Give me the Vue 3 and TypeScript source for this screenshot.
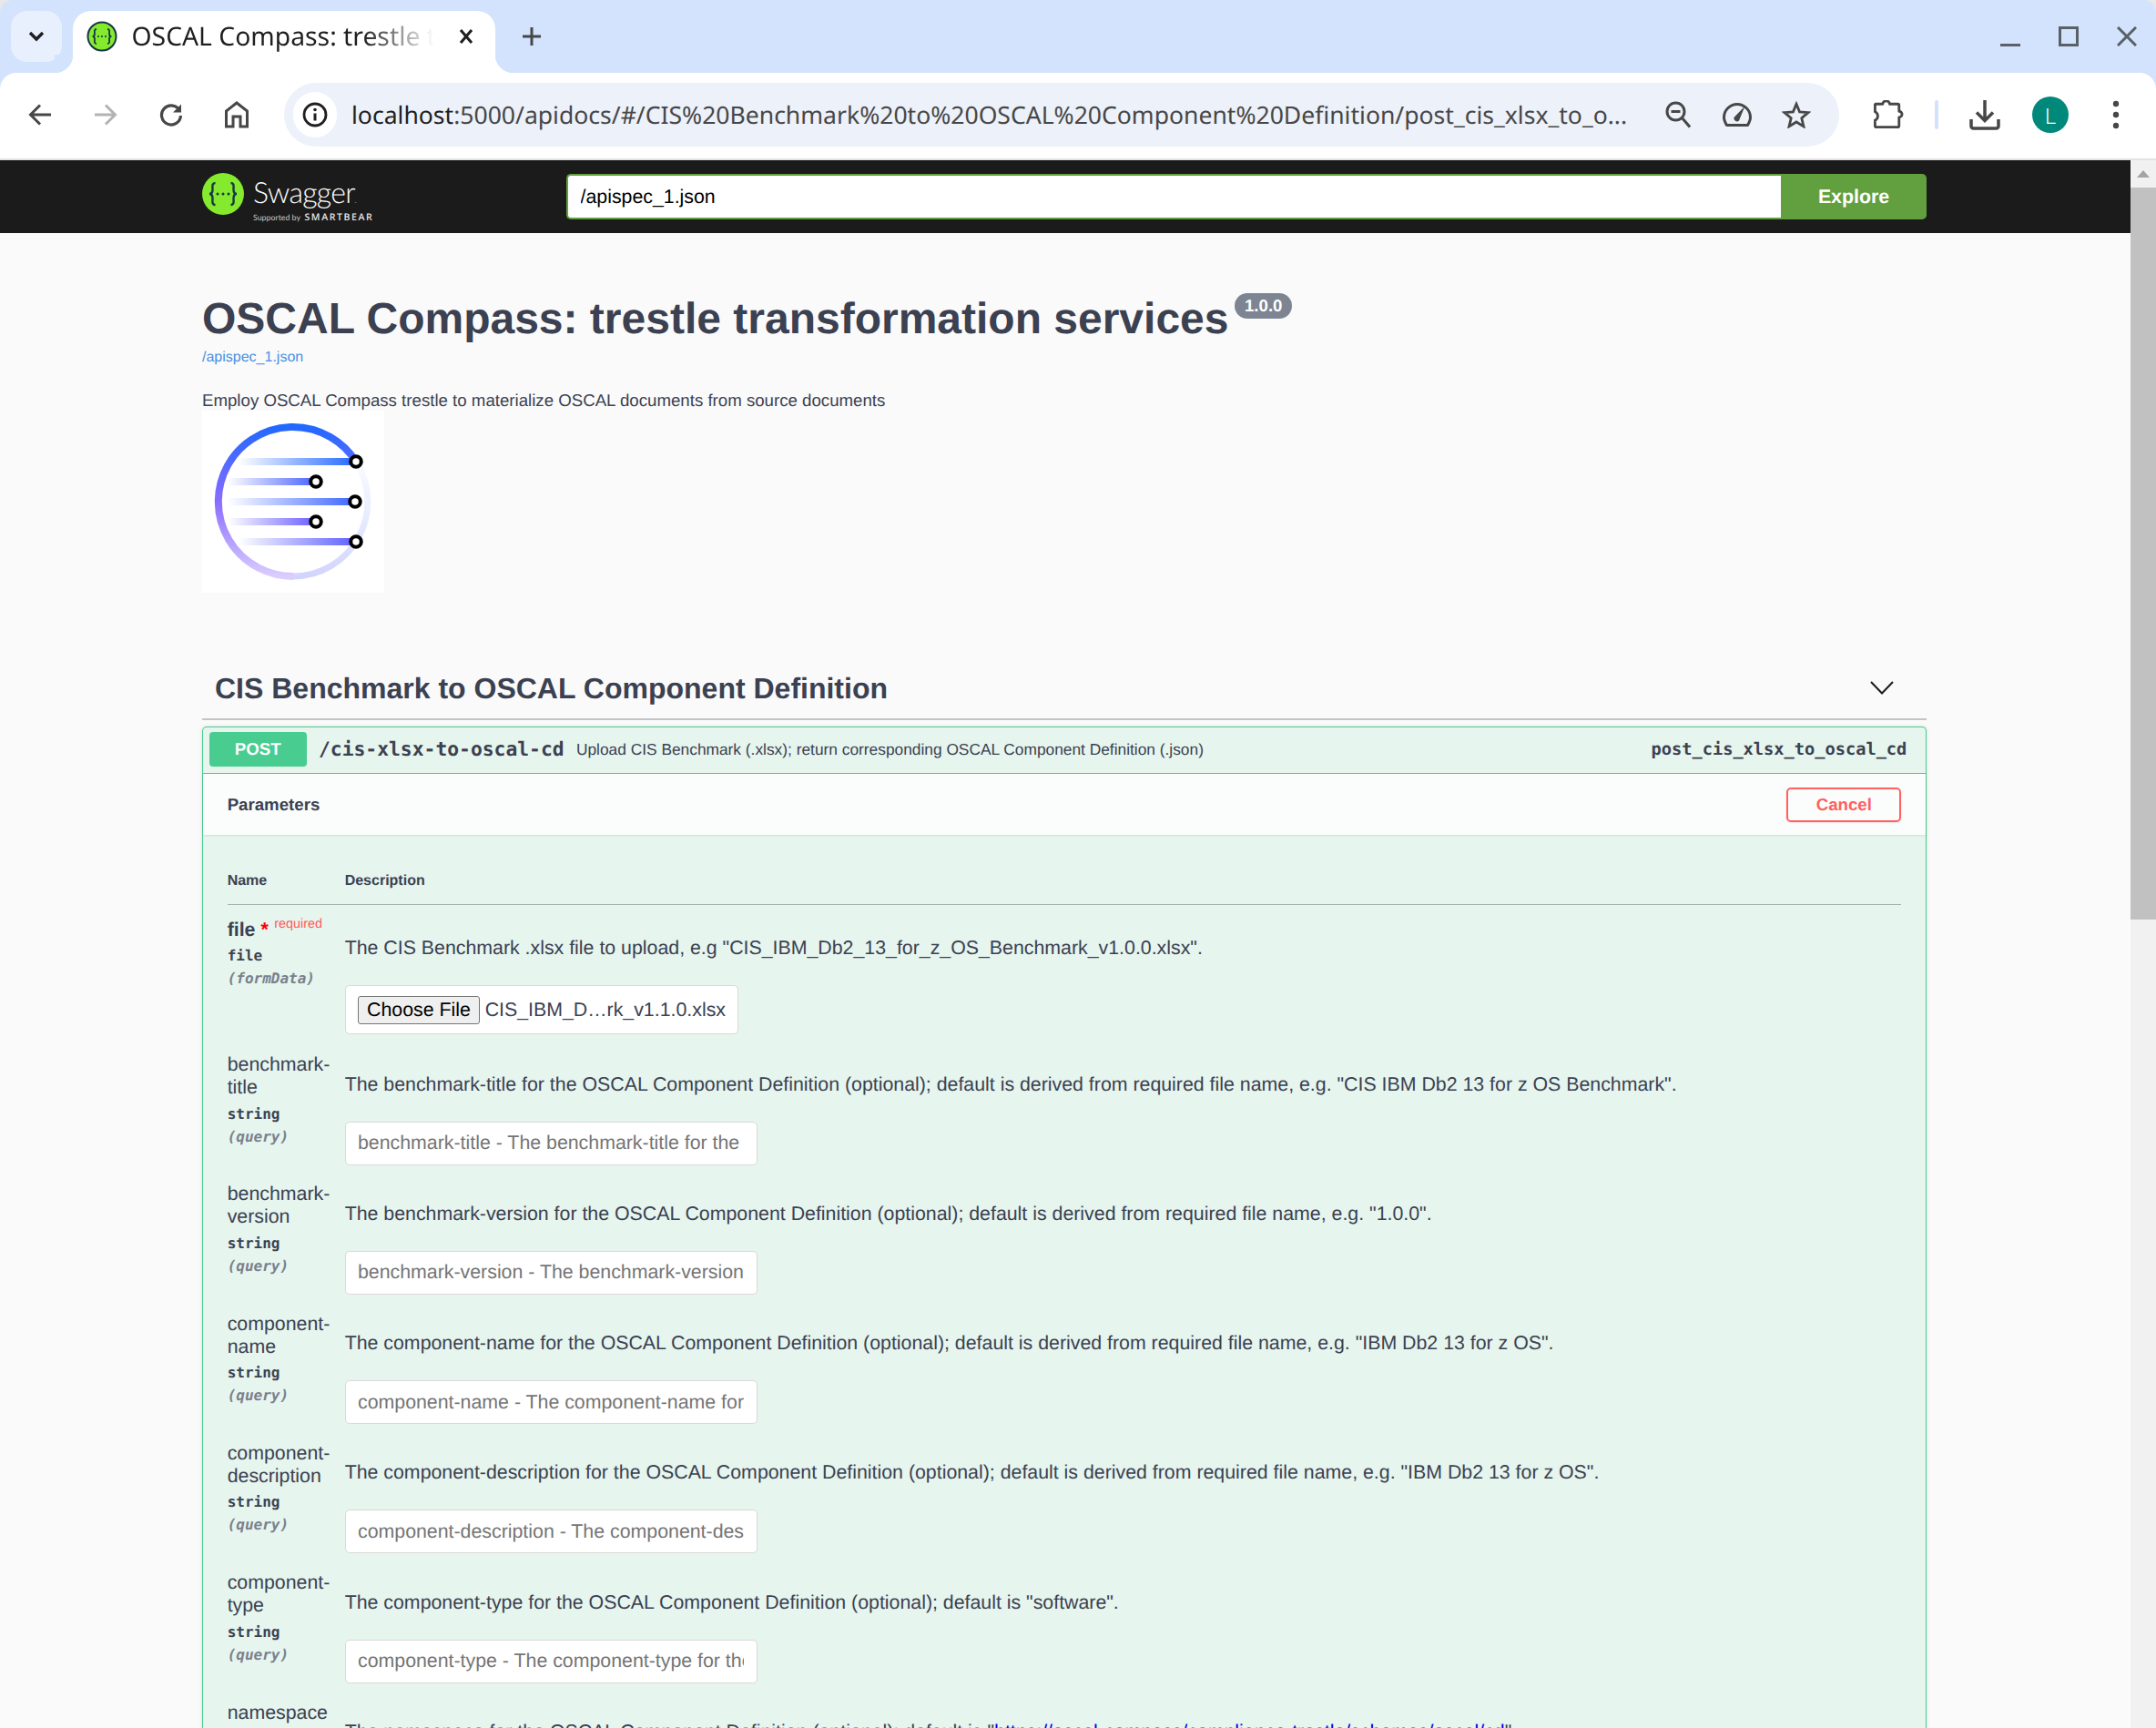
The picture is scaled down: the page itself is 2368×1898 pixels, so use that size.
<script setup lang="ts">
interface Param {
  name: string
  type: string
  where: string
  text: string
  link?: string
}

const params: Param[] = [
  {
    name: 'benchmark-title',
    type: 'string',
    where: '(query)',
    text: 'The benchmark-title for the OSCAL Component Definition (optional); default is derived from required file name, e.g. "CIS IBM Db2 13 for z OS Benchmark".',
  },
  {
    name: 'benchmark-version',
    type: 'string',
    where: '(query)',
    text: 'The benchmark-version for the OSCAL Component Definition (optional); default is derived from required file name, e.g. "1.0.0".',
  },
  {
    name: 'component-name',
    type: 'string',
    where: '(query)',
    text: 'The component-name for the OSCAL Component Definition (optional); default is derived from required file name, e.g. "IBM Db2 13 for z OS".',
  },
  {
    name: 'component-description',
    type: 'string',
    where: '(query)',
    text: 'The component-description for the OSCAL Component Definition (optional); default is derived from required file name, e.g. "IBM Db2 13 for z OS".',
  },
  {
    name: 'component-type',
    type: 'string',
    where: '(query)',
    text: 'The component-type for the OSCAL Component Definition (optional); default is "software".',
  },
  {
    name: 'namespace',
    type: 'string',
    where: '(query)',
    text: 'The namespace for the OSCAL Component Definition (optional); default is "',
    link: 'https://oscal-compass/compliance-trestle/schemas/oscal/cd',
  },
]

const logoLines = [
  { y: 56, x1: 40, x2: 169, id: 'l1' },
  { y: 78, x1: 28, x2: 125, id: 'l2' },
  { y: 100, x1: 28, x2: 168, id: 'l3' },
  { y: 122, x1: 28, x2: 125, id: 'l4' },
  { y: 144, x1: 40, x2: 169, id: 'l5' },
]
</script>

<template>
  <div class="screen">
    <header class="chrome">
      <div class="tabstrip">
        <button class="tab-search">
          <svg width="24" height="14" viewBox="0 0 24 14"><path d="M5 3l7 7 7-7" fill="none" stroke="#1f1f1f" stroke-width="3.4" /></svg>
        </button>
        <div class="tab">
          <svg class="favicon" width="34" height="34" viewBox="0 0 34 34">
            <circle cx="17" cy="17" r="15.5" fill="#85ea2d" stroke="#173646" stroke-width="2" />
            <path d="M11 9c-3 0-2 3-2 5s-1 3-2.400 3c1.400 0 2.400 1 2.400 3s-1 5 2 5M23 9c3 0 2 3 2 5s1 3 2.400 3c-1.400 0-2.400 1-2.400 3s1 5-2 5" fill="none" stroke="#173646" stroke-width="1.800" />
            <circle cx="13" cy="17" r="1.100" fill="#173646" /><circle cx="17" cy="17" r="1.100" fill="#173646" /><circle cx="21" cy="17" r="1.100" fill="#173646" />
          </svg>
          <span class="tab-title">OSCAL Compass: trestle transformation services</span>
          <svg class="tab-close" width="16" height="16" viewBox="0 0 16 16"><path d="M2 1l12 14M14 1L2 15" stroke="#1f1f1f" stroke-width="3" /></svg>
        </div>
        <svg class="new-tab" width="20" height="20" viewBox="0 0 20 20"><path d="M10 0v20M0 10h20" stroke="#474747" stroke-width="3" /></svg>
        <div class="window-controls">
          <svg width="22" height="22" viewBox="0 0 22 22"><path d="M0 20.500h22" stroke="#596066" stroke-width="3" /></svg>
          <svg width="22" height="22" viewBox="0 0 22 22"><rect x="1.500" y="1.500" width="19" height="19" fill="none" stroke="#596066" stroke-width="3" /></svg>
          <svg width="22" height="22" viewBox="0 0 22 22"><path d="M1 1l20 20M21 1L1 21" stroke="#596066" stroke-width="3" /></svg>
        </div>
      </div>

      <div class="toolbar">
        <button class="tool">
          <svg width="26" height="24" viewBox="0 0 26 24"><path d="M13 1.500L2.500 12 13 22.500M3 12h22" fill="none" stroke="#474747" stroke-width="3" /></svg>
        </button>
        <button class="tool">
          <svg width="26" height="24" viewBox="0 0 26 24"><path d="M13 1.500L23.500 12 13 22.500M23 12H1" fill="none" stroke="#b3b3b3" stroke-width="3" /></svg>
        </button>
        <button class="tool">
          <svg width="26" height="26" viewBox="0 0 26 26"><path d="M22.500 9A10.500 10.500 0 1 0 23.500 14" fill="none" stroke="#474747" stroke-width="3.200" /><path d="M24 1.500V10.500H15z" fill="#474747" /></svg>
        </button>
        <button class="tool">
          <svg width="26" height="30" viewBox="0 0 26 30"><path d="M1.500 28V11L13 2l11.500 9v17h-7.500V17H9v11z" fill="none" stroke="#474747" stroke-width="3" /></svg>
        </button>

        <div class="omnibox">
          <span class="site-info">
            <svg width="28" height="28" viewBox="0 0 28 28"><circle cx="14" cy="14" r="12" fill="none" stroke="#1f1f1f" stroke-width="2.800" /><path d="M14 12.500v8" stroke="#1f1f1f" stroke-width="3" /><circle cx="14" cy="8.500" r="1.800" fill="#1f1f1f" /></svg>
          </span>
          <span class="url"><span class="host">localhost</span>:5000/apidocs/#/CIS%20Benchmark%20to%20OSCAL%20Component%20Definition/post_cis_xlsx_to_o...</span>
          <span class="omni-action">
            <svg width="28" height="30" viewBox="0 0 28 30"><circle cx="11.500" cy="11.500" r="9.500" fill="none" stroke="#474747" stroke-width="3" /><path d="M6.500 11.500h10" stroke="#474747" stroke-width="3" /><path d="M18 18l9 10.500" stroke="#474747" stroke-width="3" /></svg>
          </span>
          <span class="omni-action">
            <svg width="32" height="26" viewBox="0 0 32 26"><path d="M4.500 24.500H27.500C29.500 21 30.500 18.500 30.500 16A14.500 14.500 0 0 0 1.500 16C1.500 18.500 2.500 21 4.500 24.500Z" fill="none" stroke="#474747" stroke-width="3" stroke-linejoin="round" /><path d="M12.500 16L24.500 3.500 18 19.500a3.400 3.400 0 0 1-5.500-3.500z" fill="#474747" /></svg>
          </span>
          <span class="omni-action">
            <svg width="32" height="30" viewBox="0 0 34 32"><path d="M17 3.500l3.800 9.200 10 .8-7.600 6.500 2.300 9.700L17 24.500l-8.500 5.200 2.300-9.700-7.600-6.500 10-.8z" fill="none" stroke="#474747" stroke-width="3" /></svg>
          </span>
        </div>

        <button class="tool">
          <svg width="34" height="32" viewBox="0 0 36 34"><path d="M3 4.500h8.500a4 3.500 0 0 1 8 0H29a1.500 1.500 0 0 1 1.500 1.500v7a3.500 3.500 0 0 1 0 7V30a1.500 1.500 0 0 1-1.500 1.500H4A1.500 1.500 0 0 1 2.500 30v-6.500a5.500 5.500 0 0 0 0-10V5z" fill="none" stroke="#474747" stroke-width="3" stroke-linejoin="round" /></svg>
        </button>
        <span class="divider"></span>
        <button class="tool">
          <svg width="34" height="34" viewBox="0 0 34 34"><path d="M17 1v22M8 14.500l9 9 9-9" fill="none" stroke="#474747" stroke-width="3.500" /><path d="M2 22v7.500a2.500 2.500 0 0 0 2.500 2.500h25a2.500 2.500 0 0 0 2.500-2.500V22" fill="none" stroke="#474747" stroke-width="3.500" /></svg>
        </button>
        <button class="tool"><span class="avatar">L</span></button>
        <button class="tool">
          <svg width="8" height="32" viewBox="0 0 8 32"><circle cx="4" cy="4" r="3.200" fill="#474747" /><circle cx="4" cy="16" r="3.200" fill="#474747" /><circle cx="4" cy="28" r="3.200" fill="#474747" /></svg>
        </button>
      </div>
    </header>

    <div class="viewport">
      <main class="page">
        <div class="topbar">
          <div class="brand">
            <svg width="46" height="46" viewBox="0 0 46 46">
              <circle cx="23" cy="23" r="23" fill="#85ea2d" />
              <path d="M14.500 11c-4 0-3 4-3 7s-1.500 5-3.500 5c2 0 3.500 2 3.500 5s-1 7 3 7M31.500 11c4 0 3 4 3 7s1.500 5 3.500 5c-2 0-3.500 2-3.500 5s1 7-3 7" fill="none" stroke="#173646" stroke-width="2.400" />
              <circle cx="17" cy="23" r="1.500" fill="#173646" /><circle cx="23" cy="23" r="1.500" fill="#173646" /><circle cx="29" cy="23" r="1.500" fill="#173646" />
            </svg>
            <div class="brand-text">
              <div class="brand-name">Swagger<span class="brand-tm">.</span></div>
              <div class="brand-sub">Supported by <b>SMARTBEAR</b></div>
            </div>
          </div>
          <form class="explore" @submit.prevent>
            <input class="explore-input" type="text" value="/apispec_1.json" />
            <button class="explore-btn">Explore</button>
          </form>
        </div>

        <div class="content">
          <section class="info">
            <div class="title-row">
              <h1>OSCAL Compass: trestle transformation services</h1>
              <span class="version">1.0.0</span>
            </div>
            <a class="spec-link">/apispec_1.json</a>
            <p class="info-desc">Employ OSCAL Compass trestle to materialize OSCAL documents from source documents</p>
            <svg class="logo" width="200" height="200" viewBox="0 0 200 200">
              <defs>
                <linearGradient id="arcLeft" x1="0" y1="0" x2="0" y2="1">
                  <stop offset="0" stop-color="#2368ff" />
                  <stop offset="0.5" stop-color="#8a6cff" />
                  <stop offset="1" stop-color="#dacdff" />
                </linearGradient>
                <linearGradient id="arcRight" x1="0" y1="1" x2="0" y2="0">
                  <stop offset="0" stop-color="#d3d4fd" />
                  <stop offset="0.55" stop-color="#e8eeff" />
                  <stop offset="1" stop-color="#fafbff" />
                </linearGradient>
                <linearGradient id="l1" x1="0" y1="0" x2="1" y2="0"><stop offset="0" stop-color="#2368ff" stop-opacity="0" /><stop offset="1" stop-color="#2368ff" /></linearGradient>
                <linearGradient id="l2" x1="0" y1="0" x2="1" y2="0"><stop offset="0" stop-color="#4a62ff" stop-opacity="0" /><stop offset="1" stop-color="#4a62ff" /></linearGradient>
                <linearGradient id="l3" x1="0" y1="0" x2="1" y2="0"><stop offset="0" stop-color="#3f66ff" stop-opacity="0" /><stop offset="1" stop-color="#3f66ff" /></linearGradient>
                <linearGradient id="l4" x1="0" y1="0" x2="1" y2="0"><stop offset="0" stop-color="#6a5dff" stop-opacity="0" /><stop offset="1" stop-color="#6a5dff" /></linearGradient>
                <linearGradient id="l5" x1="0" y1="0" x2="1" y2="0"><stop offset="0" stop-color="#5d5fff" stop-opacity="0" /><stop offset="1" stop-color="#5d5fff" /></linearGradient>
              </defs>
              <rect width="200" height="200" fill="#fff" />
              <path d="M169 56A82 82 0 1 0 100 182" fill="none" stroke="url(#arcLeft)" stroke-width="8" />
              <path d="M100 182A82 82 0 0 0 169 56" fill="none" stroke="url(#arcRight)" stroke-width="7" />
              <rect v-for="l in logoLines" :key="l.id" :x="l.x1" :y="l.y - 4" :width="l.x2 - l.x1" height="8" :fill="`url(#${l.id})`" />
              <circle v-for="l in logoLines" :key="l.y" :cx="l.x2" :cy="l.y" r="5.750" fill="#fff" stroke="#000" stroke-width="4" />
            </svg>
          </section>

          <div class="tag-header">
            <h3>CIS Benchmark to OSCAL Component Definition</h3>
            <svg width="26" height="15" viewBox="0 0 26 15"><path d="M1 1l12 12.500L25 1" fill="none" stroke="#1b1b1b" stroke-width="2" /></svg>
          </div>

          <div class="opblock">
            <div class="summary">
              <span class="method">POST</span>
              <span class="path">/cis-xlsx-to-oscal-cd</span>
              <span class="summary-text">Upload CIS Benchmark (.xlsx); return corresponding OSCAL Component Definition (.json)</span>
              <span class="op-id">post_cis_xlsx_to_oscal_cd</span>
            </div>

            <div class="params-bar">
              <h4>Parameters</h4>
              <button class="cancel">Cancel</button>
            </div>

            <div class="params">
              <div class="head">
                <div>Name</div>
                <div>Description</div>
              </div>

              <div class="row file-row">
                <div class="col-name">
                  <div class="name required">file<span class="star">&nbsp;*</span><span class="req-label">required</span></div>
                  <div class="type">file</div>
                  <div class="where">(formData)</div>
                </div>
                <div class="col-desc">
                  <p>The CIS Benchmark .xlsx file to upload, e.g "CIS_IBM_Db2_13_for_z_OS_Benchmark_v1.0.0.xlsx".</p>
                  <div class="file-box">
                    <button class="choose">Choose File</button>
                    <span class="file-name">CIS_IBM_D…rk_v1.1.0.xlsx</span>
                  </div>
                </div>
              </div>

              <div v-for="p in params" :key="p.name" class="row">
                <div class="col-name">
                  <div class="name">{{ p.name }}</div>
                  <div class="type">{{ p.type }}</div>
                  <div class="where">{{ p.where }}</div>
                </div>
                <div class="col-desc">
                  <p>{{ p.text }}<a v-if="p.link" class="doc-link">{{ p.link }}</a><template v-if="p.link">"</template></p>
                  <input class="param-input" type="text" :placeholder="`${p.name} - ${p.text}`" />
                </div>
              </div>
            </div>
          </div>
        </div>
      </main>

      <aside class="scrollbar">
        <div class="scroll-up"><span class="arrow"></span></div>
        <div class="thumb"></div>
      </aside>
    </div>
  </div>
</template>

<style>
html,
body {
  margin: 0;
  height: 1898px;
  overflow: hidden;
  background: #e8e8e8;
}
</style>

<style scoped>
.screen {
  width: 2368px;
  height: 1898px;
  display: flex;
  flex-direction: column;
  overflow: hidden;
  font-family: "Liberation Sans", Arial, sans-serif;
  color: #3b4151;
  border-radius: 14px 14px 0 0;
  text-rendering: geometricPrecision;
}

button {
  border: none;
  background: none;
  padding: 0;
  font: inherit;
}

.chrome {
  background: #d3e3fd;
  flex: none;
}

.tabstrip {
  height: 80px;
  display: flex;
  align-items: flex-start;
  padding: 12px 0 0 12px;
  box-sizing: border-box;
}

.tab-search {
  width: 56px;
  height: 56px;
  border-radius: 18px;
  background: #e9f0fd;
  display: flex;
  align-items: center;
  justify-content: center;
  margin-right: 12px;
}

.tab {
  position: relative;
  width: 464px;
  height: 68px;
  background: #fff;
  border-radius: 20px 20px 0 0;
  display: flex;
  align-items: center;
  padding: 0 24px 12px 15px;
  box-sizing: border-box;
}

.tab::before,
.tab::after {
  content: "";
  position: absolute;
  bottom: 0;
  width: 20px;
  height: 20px;
}

.tab::before {
  left: -20px;
  background: radial-gradient(circle at 0 0, #d3e3fd 20px, #fff 20.5px);
}

.tab::after {
  right: -20px;
  background: radial-gradient(circle at 100% 0, #d3e3fd 20px, #fff 20.5px);
}

.tab-title {
  flex: 1;
  margin-left: 15.5px;
  font-family: "Noto Sans", sans-serif;
  font-size: 28.3px;
  color: #1f1f1f;
  white-space: nowrap;
  overflow: hidden;
  -webkit-mask-image: linear-gradient(90deg, #000 72%, transparent 94%);
  mask-image: linear-gradient(90deg, #000 72%, transparent 94%);
}

.tab-close {
  flex: none;
  margin-left: 6px;
}

.new-tab {
  margin: 18px 0 0 30px;
}

.window-controls {
  margin: 17px 21px 0 auto;
  display: flex;
  gap: 42px;
}

.toolbar {
  height: 96px;
  box-sizing: border-box;
  background: #fff;
  border-radius: 18px 18px 0 0;
  border-bottom: 2px solid #e3e3e3;
  display: flex;
  align-items: center;
  padding: 0 0 2px 8px;
}

.tool {
  flex: none;
  width: 72px;
  height: 60px;
  display: flex;
  align-items: center;
  justify-content: center;
}

.omnibox {
  flex: none;
  width: 1708px;
  height: 70px;
  margin-left: 16px;
  margin-right: 18px;
  border-radius: 35px;
  background: #ecf1fa;
  display: flex;
  align-items: center;
  padding-right: 15px;
  box-sizing: border-box;
}

.site-info {
  flex: none;
  width: 48px;
  height: 50px;
  margin-left: 10px;
  border-radius: 25px;
  background: #fff;
  display: flex;
  align-items: center;
  justify-content: center;
}

.url {
  flex: 1;
  margin-left: 16px;
  font-family: "Noto Sans", sans-serif;
  font-size: 26.55px;
  color: #474747;
  white-space: nowrap;
  overflow: hidden;
}

.host {
  color: #1f1f1f;
}

.omni-action {
  flex: none;
  width: 65px;
  display: flex;
  justify-content: center;
}

.divider {
  flex: none;
  width: 4px;
  height: 32px;
  margin: 0 15px;
  border-radius: 2px;
  background: #d3e3fd;
}

.avatar {
  width: 40px;
  height: 40px;
  border-radius: 50%;
  background: #00897b;
  color: #fff;
  font-family: "Noto Sans", sans-serif;
  font-size: 24px;
  font-weight: 300;
  display: flex;
  align-items: center;
  justify-content: center;
}

.viewport {
  flex: 1;
  min-height: 0;
  display: flex;
}

.page {
  flex: 1;
  min-width: 0;
  background: #fafafa;
  overflow: hidden;
}

.scrollbar {
  flex: none;
  width: 28px;
  background: #f1f1f1;
}

.scroll-up {
  height: 30px;
  display: flex;
  align-items: center;
  justify-content: center;
}

.arrow {
  width: 0;
  height: 0;
  border-left: 7px solid transparent;
  border-right: 7px solid transparent;
  border-bottom: 8px solid #a3a3a3;
}

.thumb {
  height: 804px;
  background: #c1c1c1;
}

.topbar {
  height: 80px;
  background: #1b1b1b;
  display: flex;
  align-items: center;
  padding-left: 222px;
}

.brand {
  width: 400px;
  display: flex;
  align-items: center;
  gap: 10px;
  color: #fff;
  margin-top: -6px;
}

.brand-text {
  margin-top: 6px;
}

.brand-name {
  padding-top: 5px;
  font-family: Lato, sans-serif;
  font-weight: 300;
  font-size: 32px;
  line-height: 36px;
  letter-spacing: -0.7px;
}

.brand-tm {
  font-size: 8px;
}

.brand-sub {
  margin-top: -5px;
  font-family: Lato, sans-serif;
  font-size: 8.8px;
  line-height: 12px;
  color: #c9c9c9;
  white-space: nowrap;
}

.brand-sub b {
  margin-left: 2.5px;
  font-family: "Open Sans", sans-serif;
  font-size: 10.5px;
  letter-spacing: 1.6px;
  font-weight: 600;
  color: #e6e6e6;
}

.explore {
  width: 1494px;
  display: flex;
  height: 50px;
}

.explore-input {
  flex: 1;
  min-width: 0;
  box-sizing: border-box;
  border: 2.67px solid #62a03f;
  border-right: none;
  border-radius: 5px 0 0 5px;
  background: #fff;
  padding: 0 13.5px;
  font-family: "Liberation Sans", Arial, sans-serif;
  font-size: 21.33px;
  color: #000;
  outline: none;
  text-rendering: geometricPrecision;
}

.explore-btn {
  flex: none;
  width: 160px;
  background: #62a03f;
  color: #fff;
  border-radius: 0 5px 5px 0;
  font-family: "Liberation Sans", Arial, sans-serif;
  font-weight: 700;
  font-size: 21.33px;
  text-rendering: geometricPrecision;
}

.content {
  width: 1894px;
  margin-left: 222px;
}

.info {
  padding-top: 67px;
}

.title-row {
  display: flex;
  align-items: flex-start;
}

h1 {
  margin: 0;
  font-size: 48px;
  line-height: 56px;
  font-weight: 700;
  color: #3b4151;
}

.version {
  margin: -1px 0 0 7px;
  height: 28px;
  padding: 0 10.5px;
  border-radius: 14px;
  background: #7d8492;
  color: #fff;
  font-size: 18.67px;
  font-weight: 700;
  line-height: 28px;
}

.spec-link {
  display: block;
  margin-top: 4px;
  font-size: 16px;
  line-height: 20px;
  color: #4990e2;
}

.info-desc {
  margin: 26px 0 0;
  font-size: 18.67px;
  line-height: 22px;
  color: #3b4151;
}

.logo {
  display: block;
}

.tag-header {
  margin-top: 85px;
  height: 53px;
  box-sizing: content-box;
  padding-left: 14px;
  padding-right: 36px;
  border-bottom: 2px solid #c3c4c9;
  display: flex;
  align-items: flex-start;
  justify-content: space-between;
}

.tag-header h3 {
  margin: 0;
  font-size: 32px;
  line-height: 40px;
  font-weight: 700;
}

.tag-header svg {
  margin-top: 12px;
}

.opblock {
  margin-top: 7px;
  border: 1.33px solid #49cc90;
  border-bottom: none;
  border-radius: 5px 5px 0 0;
  background: #e6f5ee;
  box-shadow: 0 0 4px rgba(0, 0, 0, 0.12);
}

.summary {
  height: 51px;
  box-sizing: border-box;
  border-bottom: 1.33px solid #49cc90;
  display: flex;
  align-items: center;
  padding: 0 20.67px 2px 6.67px;
}

.method {
  width: 107px;
  height: 38px;
  border-radius: 4px;
  background: #49cc90;
  color: #fff;
  font-size: 18.67px;
  font-weight: 700;
  line-height: 38px;
  text-align: center;
}

.path {
  margin-left: 13.33px;
  font-family: "DejaVu Sans Mono", monospace;
  font-size: 21.33px;
  font-weight: 700;
}

.summary-text {
  margin-left: 13.33px;
  font-size: 17.33px;
}

.op-id {
  margin-left: auto;
  font-family: "DejaVu Sans Mono", monospace;
  font-size: 18.67px;
  font-weight: 700;
}

.params-bar {
  height: 67px;
  box-sizing: border-box;
  background: #fbfdfc;
  box-shadow: 0 1px 2px rgba(0, 0, 0, 0.1);
  display: flex;
  align-items: center;
  justify-content: space-between;
  padding: 0 26.67px;
}

.params-bar h4 {
  margin: 0;
  font-size: 18.67px;
  font-weight: 700;
}

.cancel {
  width: 126px;
  height: 38px;
  box-sizing: border-box;
  border: 2.67px solid #ff6060;
  border-radius: 5px;
  color: #ff6060;
  font-size: 18.67px;
  font-weight: 700;
  box-shadow: 0 1px 2px rgba(0, 0, 0, 0.1);
  margin-top: 1px;
  text-rendering: geometricPrecision;
}

.params {
  padding: 34px 26.67px 0;
}

.head {
  display: grid;
  grid-template-columns: 129px 1fr;
  padding-bottom: 8px;
  border-bottom: 1.33px solid #a9b2ae;
  font-size: 16px;
  line-height: 34px;
  font-weight: 700;
}

.row {
  display: grid;
  grid-template-columns: 129px 1fr;
}

.col-name {
  padding-top: 13.5px;
}

.name {
  font-size: 21.33px;
  line-height: 25px;
  width: 122px;
}

.name.required {
  font-weight: 700;
  white-space: nowrap;
  padding-top: 1.5px;
}

.star {
  color: #f00;
}

.req-label {
  position: relative;
  top: -9px;
  padding-left: 6.5px;
  font-size: 14.4px;
  font-weight: 400;
  color: #ff5a5a;
}

.type {
  margin-top: 3.5px;
  font-family: "DejaVu Sans Mono", monospace;
  font-size: 16px;
  font-weight: 700;
  line-height: 25px;
}

.file-row .type {
  margin-top: 0;
}

.where {
  font-family: "DejaVu Sans Mono", monospace;
  font-size: 16px;
  font-weight: 700;
  font-style: italic;
  line-height: 25px;
  color: #7a808c;
}

.col-desc {
  padding: 34px 0 6.33px;
}

.file-row .col-desc {
  padding-bottom: 7.5px;
}

.col-desc p {
  margin: 0 0 28px;
  font-size: 21.33px;
  line-height: 26px;
  white-space: nowrap;
}

.doc-link {
  color: #00e;
  text-decoration: underline;
}

.file-box {
  width: 432px;
  height: 54px;
  box-sizing: border-box;
  background: #fff;
  border: 1.33px solid #d9d9d9;
  border-radius: 5px;
  display: flex;
  align-items: center;
  padding-left: 13px;
}

.choose {
  height: 31px;
  width: 134.5px;
  box-sizing: border-box;
  background: #efefef;
  border: 1.33px solid #767676;
  border-radius: 3px;
  color: #000;
  font-size: 21.33px;
  line-height: 27px;
  text-rendering: geometricPrecision;
}

.file-name {
  margin-left: 5.5px;
  font-size: 21.33px;
  white-space: nowrap;
}

.param-input {
  display: block;
  width: 453px;
  height: 48px;
  box-sizing: border-box;
  background: #fff;
  border: 1.33px solid #d9d9d9;
  border-radius: 5px;
  padding: 0 13.33px;
  font-family: "Liberation Sans", Arial, sans-serif;
  font-size: 21.33px;
  outline: none;
  text-rendering: geometricPrecision;
}

.param-input::placeholder {
  color: #757575;
}
</style>
